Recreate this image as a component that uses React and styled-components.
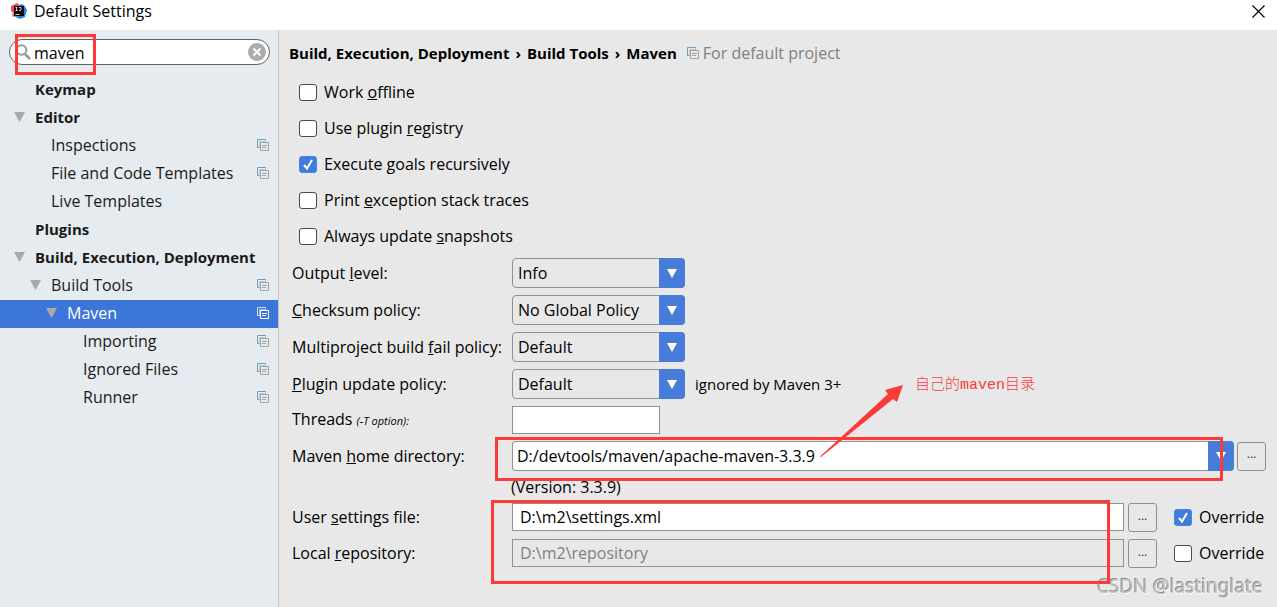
import React, { useState } from "react";
import styled, { createGlobalStyle } from "styled-components";

const GlobalStyle = createGlobalStyle`
  * {
    box-sizing: border-box;
  }
  body {
    margin: 0;
    background: #e8e8e8;
    color: #000;
    font-family: "Open Sans", "Noto Sans CJK SC", sans-serif;
    font-size: 16px;
    line-height: 24px;
  }
  input, select, button {
    margin: 0;
    font: inherit;
    color: inherit;
  }
`;

const Window = styled.div`
  display: flex;
  flex-direction: column;
  min-height: 100vh;
`;

const TitleBar = styled.header`
  display: flex;
  height: 30px;
  padding: 0 12px 8px 11px;
  align-items: center;
  background: #fff;
`;

const Title = styled.span`
  flex: 1;
  margin-left: 7px;
`;

const CloseButton = styled.button`
  display: flex;
  padding: 0;
  border: 0;
  background: none;
`;

const Body = styled.div`
  display: flex;
  flex: 1;
`;

const Sidebar = styled.aside`
  flex: 0 0 279px;
  min-width: 0;
  padding-top: 9px;
  border-right: 1px solid #c3c3c3;
  background: #e6ebef;
`;

const SearchBox = styled.div`
  position: relative;
  display: flex;
  height: 26px;
  margin: 0 8px 11px 9px;
  padding: 0 3px 0 5px;
  align-items: center;
  border: 1px solid #5f6163;
  border-radius: 13px;
  background: #fff;
`;

const SearchInput = styled.input`
  flex: 1;
  min-width: 0;
  padding: 2px 0 0 3px;
  border: 0;
  outline: 0;
  background: none;
`;

const ClearButton = styled.button`
  display: flex;
  padding: 0;
  border: 0;
  background: none;
`;

const Tree = styled.ul`
  margin: 0;
  padding: 0;
  list-style: none;
`;

const TreeItem = styled.li`
  display: flex;
  height: 28px;
  padding: 0 9px 2px ${({ $level }) => 14 + $level * 16}px;
  align-items: center;
  background: ${({ $selected }) => ($selected ? "#3b76d8" : "none")};
  color: ${({ $selected }) => ($selected ? "#fff" : "#1a1a1a")};
  font-size: ${({ $level }) => ($level === 0 ? 15 : 16)}px;
  font-weight: ${({ $level }) => ($level === 0 ? 700 : 400)};
`;

const Twisty = styled.span`
  display: flex;
  flex: 0 0 21px;
`;

const TreeLabel = styled.span`
  flex: 1;
  white-space: nowrap;
`;

const Main = styled.main`
  flex: 1;
  min-width: 0;
  padding: 11px 11px 24px 13px;
`;

const Breadcrumb = styled.h1`
  display: flex;
  margin: 0 0 9px -3px;
  align-items: center;
  gap: 6px;
  font-size: 15px;
  font-weight: 700;
  line-height: 24px;
`;

const Scope = styled.span`
  display: flex;
  margin-left: 4px;
  align-items: center;
  gap: 4px;
  color: #808080;
  font-size: 16px;
  font-weight: 400;
`;

const Options = styled.div`
  display: flex;
  flex-direction: column;
  padding: 0 0 4px 7px;
`;

const CheckLabel = styled.label`
  display: flex;
  height: ${({ $tall }) => ($tall ? 36 : 28)}px;
  align-items: center;
  gap: 7px;
`;

const CheckFrame = styled.span`
  position: relative;
  display: flex;
`;

const CheckInput = styled.input`
  width: 18px;
  height: 17px;
  border: 1px solid #4a4a4a;
  border-radius: 3px;
  appearance: none;
  background: #fff;
  &:checked {
    border-color: #3b8af0;
    background: #437cd8;
  }
`;

const CheckMark = styled.svg`
  position: absolute;
  inset: 0;
  pointer-events: none;
`;

const Form = styled.form`
  display: flex;
  flex-direction: column;
  gap: 7px;
`;

const Row = styled.div`
  display: grid;
  grid-template-columns: 220px 1fr;
  align-items: center;
`;

const PathRow = styled(Row)`
  height: 29px;
  align-items: start;
  line-height: 28px;
`;

const Label = styled.label`
  white-space: nowrap;
`;

const Hint = styled.em`
  font-size: 11px;
`;

const Controls = styled.div`
  position: relative;
  display: flex;
  align-items: ${({ $top }) => ($top ? "flex-start" : "center")};
  gap: ${({ $gap }) => $gap || 4}px;
`;

const Combo = styled.div`
  position: relative;
  display: flex;
  flex: ${({ $wide }) => ($wide ? "1" : "0 0 173px")};
  height: 30px;
`;

const Select = styled.select`
  width: 100%;
  padding: 0 30px 0 5px;
  border: 1px solid #919191;
  border-radius: 4px;
  appearance: none;
  background: #e8e8e8;
`;

const ComboInput = styled.input`
  flex: 1;
  min-width: 0;
  padding: 0 4px;
  border: 1px solid #919191;
  border-right: 0;
  border-radius: 4px 0 0 4px;
  background: #fff;
`;

const ComboButton = styled.button`
  display: flex;
  width: 26px;
  padding: 0;
  align-items: center;
  justify-content: center;
  border: 0;
  border-radius: 0 4px 4px 0;
  background: #477dd8;
`;

const ComboArrow = styled.span`
  position: absolute;
  inset: 0 0 0 auto;
  display: flex;
  width: 26px;
  align-items: center;
  justify-content: center;
  border-radius: 0 4px 4px 0;
  background: #477dd8;
  pointer-events: none;
`;

const TextInput = styled.input`
  flex: ${({ $short }) => ($short ? "0 0 148px" : "1")};
  min-width: 0;
  height: 28px;
  padding: 0 7px;
  border: 1px solid #919191;
  background: #fff;
  &:disabled {
    background: #e8e8e8;
    color: #808080;
  }
`;

const BrowseButton = styled.button`
  display: flex;
  width: 29px;
  height: 29px;
  padding: 0 0 4px;
  align-items: center;
  justify-content: center;
  border: 1px solid #8f8f8f;
  border-radius: 3px;
  background: #e8e8e8;
  color: #333;
  font-size: 12px;
`;

const Override = styled.div`
  width: 92px;
  margin-left: 13px;
`;

const SideNote = styled.span`
  font-size: 15px;
`;

const Version = styled.div`
  padding-left: 219px;
  line-height: 18px;
`;

const Paths = styled.div`
  position: relative;
  display: flex;
  flex-direction: column;
  gap: 7px;
`;

const Mark = styled.div`
  position: absolute;
  z-index: 1;
  border: 3px solid #fc3a38;
  pointer-events: none;
`;

const SearchMark = styled(Mark)`
  top: -6px;
  left: 5px;
  width: 81px;
  height: 41px;
`;

const HomeMark = styled(Mark)`
  inset: -4px 43px -10px -17px;
`;

const PathsMark = styled(Mark)`
  inset: -3px 156px -16px 199px;
`;

const ArrowMark = styled.svg`
  position: absolute;
  z-index: 1;
  top: -56px;
  left: 308px;
  pointer-events: none;
`;

const Note = styled.span`
  position: absolute;
  z-index: 1;
  top: -67px;
  left: 403px;
  color: #fc3a38;
  font-family: "Liberation Mono", "Noto Sans CJK SC", monospace;
  font-size: 15px;
  font-weight: 300;
`;

const Watermark = styled.span`
  position: absolute;
  right: 14px;
  top: 574px;
  color: #c4c4c4;
  font-family: "Noto Sans", sans-serif;
  font-size: 19px;
  text-shadow: -1px -1px 0 #8a8a8a, 1px 1px 0 #f8f8f8;
`;

const Triangle = ({ width, height, color }) => (
  <svg width={width} height={height} viewBox="0 0 10 10" preserveAspectRatio="none">
    <path d="M0 0h10L5 10z" fill={color} />
  </svg>
);

const CopyIcon = ({ selected }) => {
  const back = selected ? "#d5e1f7" : "#5f9fc8";
  const front = selected ? "#fff" : "#a3a3a3";
  return (
    <svg width="12" height="12" viewBox="0 0 12 12" fill="none">
      <path d="M2.500 8.500H.5V.5h8v1" stroke={back} />
      <path d="M3.500 3.500h8v8h-8z" stroke={front} />
      <path d="M2.500 9V2.500H9" stroke={front} strokeOpacity=".5" />
      <path d="M5 6.500h5M5 8.500h4" stroke={front} />
    </svg>
  );
};

const Logo = () => (
  <svg width="16" height="16" viewBox="0 0 16 16">
    <path d="M0 3l6-3 4 3v8l-6 3-3-1 1-3-2-2z" fill="#f5476a" />
    <path d="M0 8l3 1-1 4 5 2V8z" fill="#f98a2b" />
    <path d="M9 1l4 1 3 5-2 7-5 2-4-2 4-3z" fill="#1c86f2" />
    <path d="M3 3h10v10H3z" fill="#0b0708" />
    <path d="M4.500 4.500h2m-1 0v3m-1 0h2M8 4.500h2v2.500l-1 .5H8M4.500 11.500h4" stroke="#fff" fill="none" strokeWidth=".8" />
  </svg>
);

const Check = ({ label, tall, defaultChecked }) => {
  const [checked, setChecked] = useState(Boolean(defaultChecked));
  return (
    <CheckLabel $tall={tall}>
      <CheckFrame>
        <CheckInput type="checkbox" checked={checked} onChange={() => setChecked(!checked)} />
        {checked && (
          <CheckMark width="18" height="17" viewBox="0 0 18 17">
            <path d="M5 9l3 3.500L13 4" stroke="#fff" strokeWidth="2" fill="none" />
          </CheckMark>
        )}
      </CheckFrame>
      <span>{label}</span>
    </CheckLabel>
  );
};

const tree = [
  { label: "Keymap", level: 0 },
  { label: "Editor", level: 0, open: true },
  { label: "Inspections", level: 1, copy: true },
  { label: "File and Code Templates", level: 1, copy: true },
  { label: "Live Templates", level: 1 },
  { label: "Plugins", level: 0 },
  { label: "Build, Execution, Deployment", level: 0, open: true },
  { label: "Build Tools", level: 1, open: true, copy: true },
  { label: "Maven", level: 2, open: true, copy: true, selected: true },
  { label: "Importing", level: 3, copy: true },
  { label: "Ignored Files", level: 3, copy: true },
  { label: "Runner", level: 3, copy: true },
];

const options = [
  { id: "offline", label: <>Work <u>o</u>ffline</> },
  { id: "registry", label: <>Use plugin <u>r</u>egistry</> },
  { id: "recursive", label: <>Execute <u>g</u>oals recursively</>, checked: true },
  { id: "traces", label: <>Print <u>e</u>xception stack traces</> },
  { id: "snapshots", label: <>Always update <u>s</u>napshots</> },
];

const policies = [
  { id: "output", label: <>Output <u>l</u>evel:</>, value: "Info" },
  { id: "checksum", label: <><u>C</u>hecksum policy:</>, value: "No Global Policy" },
  { id: "fail", label: <>Multiproject build <u>f</u>ail policy:</>, value: "Default" },
  { id: "update", label: <><u>P</u>lugin update policy:</>, value: "Default", note: "ignored by Maven 3+" },
];

export default function App() {
  return (
    <Window>
      <GlobalStyle />
      <TitleBar>
        <Logo />
        <Title>Default Settings</Title>
        <CloseButton aria-label="Close">
          <svg width="13" height="13" viewBox="0 0 13 13">
            <path d="M.5.5l12 12m0-12l-12 12" stroke="#000" strokeWidth="1.200" />
          </svg>
        </CloseButton>
      </TitleBar>
      <Body>
        <Sidebar>
          <SearchBox>
            <svg width="16" height="16" viewBox="0 0 16 16" fill="none" stroke="#999">
              <circle cx="6.500" cy="6" r="4.800" strokeWidth="2" />
              <path d="M10 10l5 5" strokeWidth="2.600" />
            </svg>
            <SearchInput aria-label="Search" defaultValue="maven" />
            <ClearButton aria-label="Clear">
              <svg width="18" height="18" viewBox="0 0 18 18">
                <circle cx="9" cy="9" r="9" fill="#acacac" />
                <path d="M5.500 5.500l7 7m0-7l-7 7" stroke="#fff" strokeWidth="2" />
              </svg>
            </ClearButton>
            <SearchMark />
          </SearchBox>
          <Tree>
            {tree.map(({ label, level, open, copy, selected }) => (
              <TreeItem key={label} $level={level} $selected={selected}>
                <Twisty>{open && <Triangle width={11} height={10} color="#a9a9a9" />}</Twisty>
                <TreeLabel>{label}</TreeLabel>
                {copy && <CopyIcon selected={selected} />}
              </TreeItem>
            ))}
          </Tree>
        </Sidebar>
        <Main>
          <Breadcrumb>
            <span>Build, Execution, Deployment</span>
            <span>›</span>
            <span>Build Tools</span>
            <span>›</span>
            <span>Maven</span>
            <Scope>
              <CopyIcon />
              For default project
            </Scope>
          </Breadcrumb>
          <Options>
            {options.map(({ id, label, checked }) => (
              <Check key={id} tall label={label} defaultChecked={checked} />
            ))}
          </Options>
          <Form>
            {policies.map(({ id, label, value, note }) => (
              <Row key={id}>
                <Label htmlFor={id}>{label}</Label>
                <Controls $gap={10}>
                  <Combo>
                    <Select id={id} defaultValue={value}>
                      <option>{value}</option>
                    </Select>
                    <ComboArrow>
                      <Triangle width={10} height={9} color="#fff" />
                    </ComboArrow>
                  </Combo>
                  {note && <SideNote>{note}</SideNote>}
                </Controls>
              </Row>
            ))}
            <Row>
              <Label htmlFor="threads">
                Threads <Hint>(-T option):</Hint>
              </Label>
              <Controls>
                <TextInput id="threads" $short />
              </Controls>
            </Row>
            <Row>
              <Label htmlFor="home">Maven <u>h</u>ome directory:</Label>
              <Controls $gap={3}>
                <Combo $wide>
                  <ComboInput id="home" defaultValue="D:/devtools/maven/apache-maven-3.3.9" />
                  <ComboButton type="button" aria-label="Choose Maven home">
                    <Triangle width={10} height={9} color="#fff" />
                  </ComboButton>
                </Combo>
                <BrowseButton type="button">...</BrowseButton>
                <HomeMark />
                <ArrowMark width="84" height="74" viewBox="0 0 84 74">
                  <path d="M0 71.500L68 9l-3-4 18-5-6 17-4-3L1 72z" fill="#fc3a38" />
                </ArrowMark>
                <Note>自己的maven目录</Note>
              </Controls>
            </Row>
            <Version>(Version: 3.3.9)</Version>
            <Paths>
              <PathRow>
                <Label htmlFor="settings">User <u>s</u>ettings file:</Label>
                <Controls $top>
                  <TextInput id="settings" defaultValue="D:\m2\settings.xml" />
                  <BrowseButton type="button">...</BrowseButton>
                  <Override>
                    <Check label="Override" defaultChecked />
                  </Override>
                </Controls>
              </PathRow>
              <PathRow>
                <Label htmlFor="repository">Local <u>r</u>epository:</Label>
                <Controls $top>
                  <TextInput id="repository" defaultValue="D:\m2\repository" disabled />
                  <BrowseButton type="button">...</BrowseButton>
                  <Override>
                    <Check label="Override" />
                  </Override>
                </Controls>
              </PathRow>
              <PathsMark />
            </Paths>
          </Form>
        </Main>
      </Body>
      <Watermark>CSDN @lastinglate</Watermark>
    </Window>
  );
}
